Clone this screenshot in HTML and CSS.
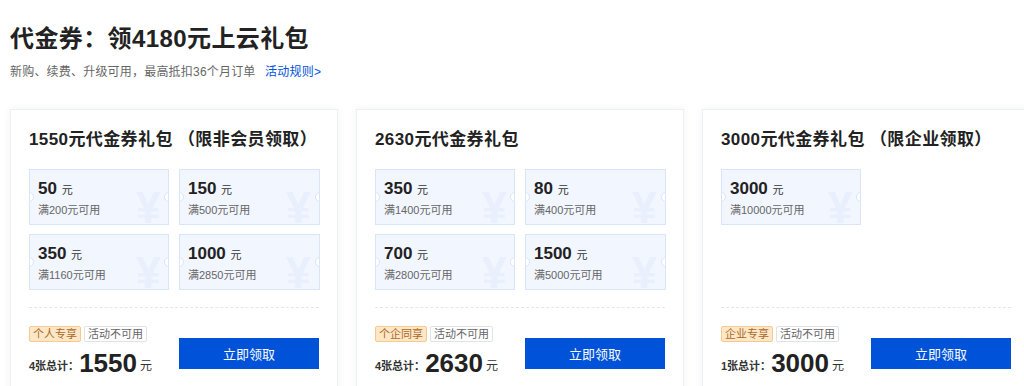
FILE: index.html
```html
<!DOCTYPE html>
<html lang="zh-CN">

<head>
  <meta charset="UTF-8">
  <meta name="viewport" content="width=device-width, initial-scale=1.0">
  <title>代金券</title>
  <link rel="stylesheet" href="styles.css">
</head>

<body>
  <div class="page">
    <h1 class="page-title">代金券：领4180元上云礼包</h1>
    <p class="page-desc">新购、续费、升级可用，最高抵扣36个月订单 <a class="rule-link" href="#">活动规则&gt;</a></p>

    <div class="cards">
      <div class="card">
        <h2 class="card-title">1550元代金券礼包 （限非会员领取）</h2>
        <div class="coupons">
          <div class="coupon">
            <div class="coupon-value">50 <span>元</span></div>
            <div class="coupon-cond">满200元可用</div>
          </div>
          <div class="coupon">
            <div class="coupon-value">150 <span>元</span></div>
            <div class="coupon-cond">满500元可用</div>
          </div>
          <div class="coupon">
            <div class="coupon-value">350 <span>元</span></div>
            <div class="coupon-cond">满1160元可用</div>
          </div>
          <div class="coupon">
            <div class="coupon-value">1000 <span>元</span></div>
            <div class="coupon-cond">满2850元可用</div>
          </div>
        </div>
        <div class="card-foot">
          <div class="foot-info">
            <div class="tags">
              <span class="tag tag-orange">个人专享</span>
              <span class="tag tag-gray">活动不可用</span>
            </div>
            <div class="total">4张总计：<b>1550</b> <span>元</span></div>
          </div>
          <button class="btn">立即领取</button>
        </div>
      </div>

      <div class="card">
        <h2 class="card-title">2630元代金券礼包</h2>
        <div class="coupons">
          <div class="coupon">
            <div class="coupon-value">350 <span>元</span></div>
            <div class="coupon-cond">满1400元可用</div>
          </div>
          <div class="coupon">
            <div class="coupon-value">80 <span>元</span></div>
            <div class="coupon-cond">满400元可用</div>
          </div>
          <div class="coupon">
            <div class="coupon-value">700 <span>元</span></div>
            <div class="coupon-cond">满2800元可用</div>
          </div>
          <div class="coupon">
            <div class="coupon-value">1500 <span>元</span></div>
            <div class="coupon-cond">满5000元可用</div>
          </div>
        </div>
        <div class="card-foot">
          <div class="foot-info">
            <div class="tags">
              <span class="tag tag-orange">个企同享</span>
              <span class="tag tag-gray">活动不可用</span>
            </div>
            <div class="total">4张总计：<b>2630</b> <span>元</span></div>
          </div>
          <button class="btn">立即领取</button>
        </div>
      </div>

      <div class="card">
        <h2 class="card-title">3000元代金券礼包 （限企业领取）</h2>
        <div class="coupons">
          <div class="coupon">
            <div class="coupon-value">3000 <span>元</span></div>
            <div class="coupon-cond">满10000元可用</div>
          </div>
        </div>
        <div class="card-foot">
          <div class="foot-info">
            <div class="tags">
              <span class="tag tag-orange">企业专享</span>
              <span class="tag tag-gray">活动不可用</span>
            </div>
            <div class="total">1张总计：<b>3000</b> <span>元</span></div>
          </div>
          <button class="btn">立即领取</button>
        </div>
      </div>
    </div>
  </div>
</body>

</html>
```

FILE: styles.css
```css
body {
  margin: 0;
  background-color: #ffffff;
  font-family: "Liberation Sans", "Noto Sans CJK SC", sans-serif;
  color: #222;
  overflow: hidden;
}

.page {
  padding: 23px 0 0 10px;
}

.page-title {
  margin: 0;
  font-size: 24px;
  line-height: 32px;
  font-weight: 700;
  letter-spacing: 0.4px;
  color: #222;
}

.page-desc {
  margin: 8px 0 0;
  font-size: 12px;
  line-height: 18px;
  letter-spacing: 0.2px;
  color: #666;
}

.rule-link {
  margin-left: 6px;
  color: #0052d9;
  text-decoration: none;
}

.cards {
  display: grid;
  grid-template-columns: repeat(3, 328px);
  gap: 18px;
  margin-top: 28px;
  width: 1100px;
}

.card {
  box-sizing: border-box;
  height: 290px;
  padding: 18px 18px 0;
  border: 1px solid #eceff4;
  box-shadow: 0 0 8px rgba(30, 50, 90, 0.06);
  background-color: #fff;
  display: flex;
  flex-direction: column;
}

.card-title {
  margin: 0;
  font-size: 17px;
  line-height: 24px;
  font-weight: 700;
  letter-spacing: 0.4px;
  color: #222;
}

.coupons {
  display: grid;
  grid-template-columns: 140px 141px;
  grid-auto-rows: 56px;
  gap: 9px 10px;
  margin-top: 17px;
  height: 121px;
  align-content: start;
}

.coupon {
  position: relative;
  box-sizing: border-box;
  padding: 8px 8px 0;
  background-color: #f2f6ff;
  border: 1px solid #d9e5fa;
  overflow: hidden;
}

/* notches */
.coupon::before,
.coupon::after {
  content: "";
  position: absolute;
  top: 22px;
  width: 8px;
  height: 8px;
  border-radius: 50%;
  background-color: #fff;
  border: 1px solid #d9e5fa;
}

.coupon::before {
  left: -6px;
}

.coupon::after {
  right: -6px;
}

.coupon-value {
  position: relative;
  font-size: 17px;
  line-height: 22px;
  font-weight: 700;
  color: #222;
}

.coupon-value span {
  font-size: 11px;
  font-weight: 400;
  color: #333;
}

.coupon-value::after {
  content: "¥";
  position: absolute;
  left: 98px;
  top: 8px;
  font-size: 44px;
  line-height: 44px;
  font-weight: 700;
  color: #e9effc;
}

.coupon-cond {
  position: relative;
  margin-top: 2px;
  font-size: 11px;
  line-height: 14px;
  color: #666;
}

.card-foot {
  margin-top: 17px;
  border-top: 1px dashed #e3e6eb;
  padding-top: 18px;
  display: flex;
  justify-content: space-between;
  align-items: flex-start;
}

.tags {
  display: flex;
  gap: 3px;
}

.tag {
  box-sizing: border-box;
  height: 16px;
  padding: 0 3px;
  font-size: 11px;
  line-height: 14px;
  border: 1px solid;
  border-radius: 2px;
}

.tag-orange {
  background-color: #fee7c6;
  border-color: #f8c98c;
  color: #a9692b;
}

.tag-gray {
  background-color: #fff;
  border-color: #dfe2e8;
  color: #666;
}

.total {
  margin-top: 6px;
  font-size: 11px;
  font-weight: 700;
  color: #333;
  line-height: 30px;
}

.total b {
  font-size: 26px;
  vertical-align: -2px;
  color: #222;
}

.total span {
  font-size: 12px;
  font-weight: 400;
}

.btn {
  margin-top: 12px;
  width: 140px;
  height: 31px;
  border: none;
  background-color: #0052d9;
  color: #fff;
  font-family: inherit;
  font-size: 13px;
  cursor: pointer;
}
```
